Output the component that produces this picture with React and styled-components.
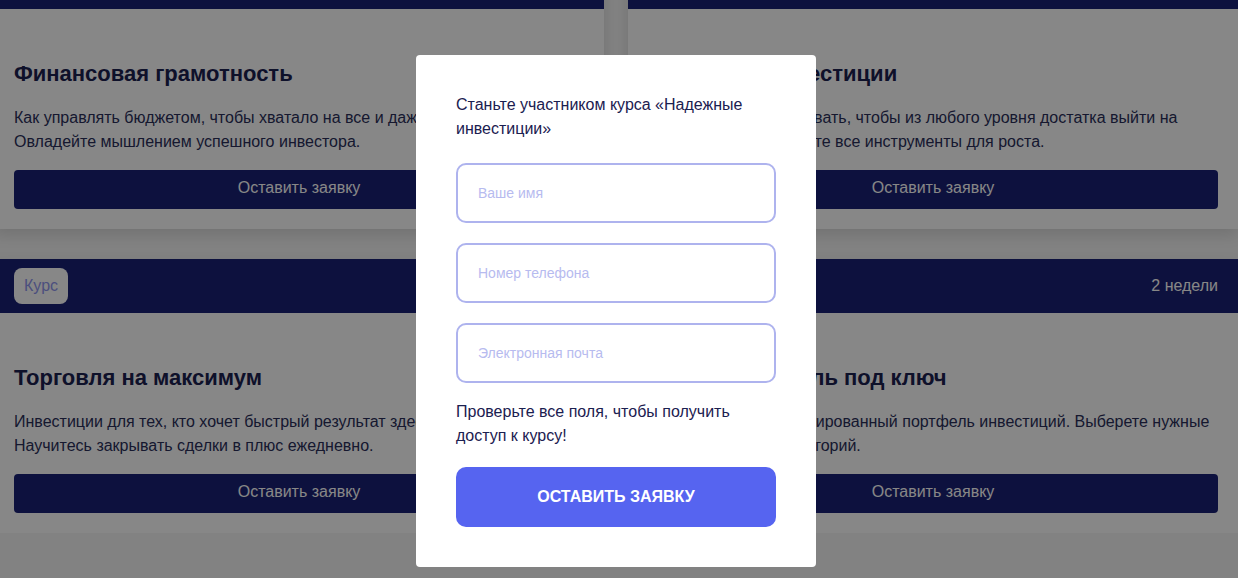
import React from 'react';
import styled, { createGlobalStyle } from 'styled-components';

const GlobalStyle = createGlobalStyle`
  * {
    box-sizing: border-box;
  }

  body {
    margin: 0;
    background: #f5f5f5;
    font-family: "Liberation Sans", Arial, "Noto Sans", sans-serif;
    overflow: hidden;
  }
`;

const CourseGrid = styled.div`
  display: grid;
  grid-template-columns: 1fr 1fr;
  column-gap: 24px;
  row-gap: 30px;
  width: calc(100% + 6px);
  margin: -45px 0 0 -6px;
`;

const Card = styled.article`
  display: flex;
  flex-direction: column;
  background: #fff;
  box-shadow: 0 6px 14px rgba(0, 0, 0, 0.12);
`;

const CardHead = styled.div`
  display: flex;
  align-items: center;
  justify-content: space-between;
  height: 54px;
  padding: 0 20px;
  background: #192075;
`;

const Badge = styled.span`
  height: 36px;
  padding: 0 10px;
  border-radius: 8px;
  background: #fff;
  color: #8f96ee;
  font-size: 16px;
  line-height: 36px;
`;

const Duration = styled.span`
  color: #fff;
  font-size: 16px;
`;

const CardBody = styled.div`
  padding: 52px 20px 20px;
`;

const CardTitle = styled.h3`
  margin: 0 0 19px;
  color: #1b2050;
  font-size: 22px;
  line-height: 26px;
  font-weight: 700;
`;

const CardText = styled.p`
  margin: 0 0 16px;
  color: #2a2f5a;
  font-size: 16px;
  line-height: 24px;
`;

const CardButton = styled.button`
  display: block;
  width: 100%;
  height: 39px;
  padding: 0 0 3px;
  border: none;
  border-radius: 4px;
  background: #192075;
  color: #fff;
  font-family: inherit;
  font-size: 16px;
  cursor: pointer;
`;

const Overlay = styled.div`
  position: fixed;
  inset: 0;
  display: flex;
  align-items: flex-start;
  justify-content: center;
  padding: 55px 6px 0 0;
  background: rgba(0, 0, 0, 0.47);
`;

const Modal = styled.div`
  width: 400px;
  padding: 38px 40px 40px;
  border-radius: 4px;
  background: #fff;
`;

const ModalText = styled.p`
  margin: ${({ $spacing }) => $spacing};
  color: #1b2050;
  font-size: 16px;
  line-height: 24px;
`;

const Form = styled.form`
  display: flex;
  flex-direction: column;
  gap: 20px;
`;

const Input = styled.input`
  display: block;
  width: 100%;
  height: 60px;
  padding: 0 20px;
  border: 2px solid #aeb3ee;
  border-radius: 10px;
  background: #fff;
  color: #1b2050;
  font-family: inherit;
  font-size: 14px;
  outline: none;

  &::placeholder {
    color: #b7bbef;
  }
`;

const SubmitButton = styled.button`
  display: block;
  width: 100%;
  height: 60px;
  border: none;
  border-radius: 10px;
  background: #5664f0;
  color: #fff;
  font-family: inherit;
  font-size: 16px;
  font-weight: 700;
  text-transform: uppercase;
  cursor: pointer;
`;

const courses = [
  {
    id: 1,
    duration: '1 месяц',
    title: 'Финансовая грамотность',
    lines: ['Как управлять бюджетом, чтобы хватало на все и даже оставалось.', 'Овладейте мышлением успешного инвестора.'],
  },
  {
    id: 2,
    duration: '3 месяца',
    title: 'Надежные инвестиции',
    lines: ['Узнайте, как зарабатывать, чтобы из любого уровня достатка выйти на', 'новый уровень. Освойте все инструменты для роста.'],
  },
  {
    id: 3,
    duration: '1 неделя',
    title: 'Торговля на максимум',
    lines: ['Инвестиции для тех, кто хочет быстрый результат здесь и сейчас.', 'Научитесь закрывать сделки в плюс ежедневно.'],
  },
  {
    id: 4,
    duration: '2 недели',
    title: 'Умный портфель под ключ',
    lines: ['Получите диверсифицированный портфель инвестиций. Выберете нужные', 'активы из разных категорий.'],
  },
];

const App = () => {
  return (
    <>
      <GlobalStyle />
      <CourseGrid>
        {courses.map(course => (
          <Card key={course.id}>
            <CardHead>
              <Badge>Курс</Badge>
              <Duration>{course.duration}</Duration>
            </CardHead>
            <CardBody>
              <CardTitle>{course.title}</CardTitle>
              <CardText>
                {course.lines[0]}
                <br />
                {course.lines[1]}
              </CardText>
              <CardButton>Оставить заявку</CardButton>
            </CardBody>
          </Card>
        ))}
      </CourseGrid>

      {/* модалка записи на курс */}
      <Overlay>
        <Modal>
          <ModalText $spacing="0 0 22px">Станьте участником курса «Надежные инвестиции»</ModalText>
          <Form onSubmit={e => e.preventDefault()}>
            <Input type="text" placeholder="Ваше имя" />
            <Input type="tel" placeholder="Номер телефона" />
            <Input type="email" placeholder="Электронная почта" />
          </Form>
          <ModalText $spacing="17px 0 19px">Проверьте все поля, чтобы получить доступ к курсу!</ModalText>
          <SubmitButton type="button">Оставить заявку</SubmitButton>
        </Modal>
      </Overlay>
    </>
  );
};

export default App;
